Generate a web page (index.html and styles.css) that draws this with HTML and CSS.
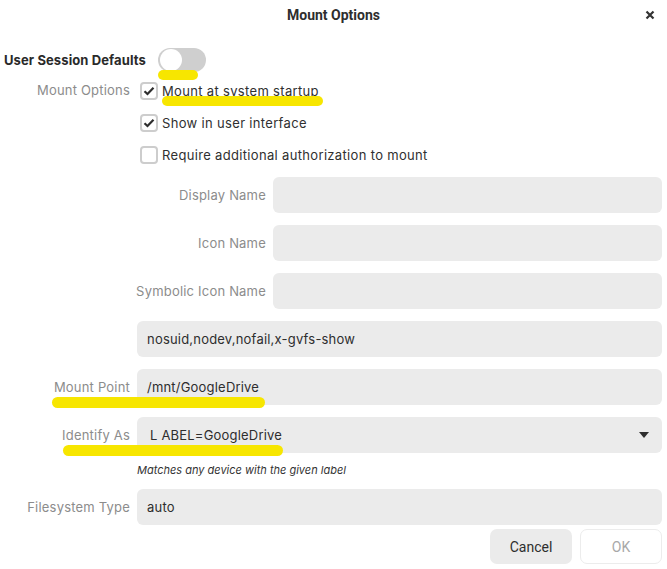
FILE: index.html
```html
<!DOCTYPE html>
<html>
<head>
<meta charset="utf-8">
<link rel="stylesheet" href="styles.css">
</head>
<body>
<div class="dialog">
  <header class="titlebar">
    <span class="title">Mount Options</span>
    <span class="close">
      <svg width="10" height="10" viewBox="0 0 10 10"><path d="M1.5 1.5 L8.5 8.5 M8.5 1.5 L1.5 8.5" stroke="#333" stroke-width="2.2" stroke-linecap="butt"/></svg>
    </span>
  </header>

  <div class="session-row">
    <span class="session-label">User Session Defaults</span>
    <span class="switch"><span class="knob"></span></span>
  </div>

  <div class="form">
    <div class="row row-checks">
      <span class="label label-top">Mount Options</span>
      <div class="checks">
        <label class="check"><span class="box on"><svg width="12" height="10" viewBox="0 0 12 10"><path d="M1.5 5.2 L4.5 8 L10.5 1.8" fill="none" stroke="#2e2e2e" stroke-width="2.2"/></svg></span><span>Mount at system startup</span></label>
        <label class="check"><span class="box on"><svg width="12" height="10" viewBox="0 0 12 10"><path d="M1.5 5.2 L4.5 8 L10.5 1.8" fill="none" stroke="#2e2e2e" stroke-width="2.2"/></svg></span><span>Show in user interface</span></label>
        <label class="check"><span class="box"></span><span>Require additional authorization to mount</span></label>
      </div>
    </div>

    <div class="row">
      <span></span>
      <div class="subform">
        <div class="subrow"><span class="label">Display Name</span><div class="entry"></div></div>
        <div class="subrow"><span class="label">Icon Name</span><div class="entry"></div></div>
        <div class="subrow"><span class="label">Symbolic Icon Name</span><div class="entry"></div></div>
        <div class="entry">nosuid,nodev,nofail,x-gvfs-show</div>
      </div>
    </div>

    <div class="row">
      <span class="label">Mount Point</span>
      <div class="entry">/mnt/GoogleDrive</div>
    </div>

    <div class="row row-identify">
      <span class="label">Identify As</span>
      <div class="combo-wrap">
        <div class="entry combo"><span>L ABEL=GoogleDrive</span><svg class="arrow" width="10" height="6" viewBox="0 0 10 6"><path d="M0 0 H10 L5 6 Z" fill="#2e2e2e"/></svg></div>
        <div class="hint">Matches any device with the given label</div>
      </div>
    </div>

    <div class="row">
      <span class="label">Filesystem Type</span>
      <div class="entry">auto</div>
    </div>
  </div>

  <div class="buttons">
    <button class="btn cancel">Cancel</button>
    <button class="btn ok">OK</button>
  </div>

  <span class="mark mark-switch"></span>
  <span class="mark mark-startup"></span>
  <span class="mark mark-point"></span>
  <span class="mark mark-identify"></span>
</div>
</body>
</html>
```

FILE: styles.css
```css
html, body {
  margin: 0;
  padding: 0;
  background: #ffffff;
}

.dialog {
  position: relative;
  width: 667px;
  height: 569px;
  font-family: Inter, "Noto Sans", sans-serif;
  font-size: 13px;
  letter-spacing: 0.2px;
  color: #303030;
  overflow: hidden;
}

.titlebar {
  height: 30px;
  display: flex;
  align-items: center;
  justify-content: center;
  position: relative;
}

.title {
  font-family: Roboto, "Liberation Sans", sans-serif;
  font-weight: 700;
  font-size: 14px;
  letter-spacing: 0;
  color: #2e2e2e;
}

.close {
  position: absolute;
  right: 12px;
  top: 10px;
  width: 10px;
  height: 10px;
  display: flex;
}

.session-row {
  display: flex;
  align-items: center;
  height: 24px;
  margin-top: 18px;
  padding-left: 4px;
  gap: 12px;
}

.session-label {
  font-weight: 700;
  font-size: 13px;
  letter-spacing: 0.1px;
  color: #2a2a2a;
}

.switch {
  width: 48px;
  height: 24px;
  border-radius: 12px;
  background: #cfcfcf;
  display: flex;
  align-items: center;
  padding-left: 2px;
  box-sizing: border-box;
}

.knob {
  width: 22px;
  height: 22px;
  border-radius: 50%;
  background: #ffffff;
}

.form {
  display: flex;
  flex-direction: column;
  gap: 12px;
  margin-top: 10px;
  padding-right: 5px;
}

.row {
  display: grid;
  grid-template-columns: 130px 1fr;
  column-gap: 7px;
  align-items: center;
}

.label {
  text-align: right;
  white-space: nowrap;
  color: #8c8c8c;
}

.label-top {
  align-self: start;
}

.row-checks {
  margin-bottom: 1px;
}

.checks {
  display: flex;
  flex-direction: column;
  gap: 14px;
  padding-left: 3px;
  letter-spacing: 0.33px;
}

.check {
  display: flex;
  align-items: center;
  gap: 4px;
  height: 18px;
}

.box {
  width: 18px;
  height: 18px;
  box-sizing: border-box;
  border: 2px solid #cdcdcd;
  border-radius: 4px;
  display: flex;
  align-items: center;
  justify-content: center;
  background: #fff;
}

.subform {
  display: flex;
  flex-direction: column;
  gap: 12px;
}

.subrow {
  display: grid;
  grid-template-columns: 129px 1fr;
  column-gap: 7px;
  align-items: center;
}

.subrow .label {
  justify-self: end;
}

.entry {
  height: 36px;
  border-radius: 6px;
  background: #ebebeb;
  display: flex;
  align-items: center;
  padding: 0 10px;
  box-sizing: border-box;
  color: #2e2e2e;
}

.combo {
  justify-content: space-between;
  padding-left: 13px;
  padding-right: 13px;
}

.combo-wrap {
  display: flex;
  flex-direction: column;
  gap: 10px;
}

.row-identify {
  align-items: start;
}

.row-identify .label {
  line-height: 36px;
}

.hint {
  font-size: 11px;
  font-style: italic;
  letter-spacing: 0;
  color: #333;
}

.buttons {
  display: flex;
  justify-content: flex-end;
  gap: 8px;
  padding-right: 5px;
  margin-top: 4px;
}

.btn {
  width: 82px;
  height: 35px;
  border-radius: 7px;
  font-family: Roboto, "Liberation Sans", sans-serif;
  font-size: 14px;
  box-sizing: border-box;
}

.cancel {
  background: #ebebeb;
  border: none;
  color: #2e2e2e;
}

.ok {
  background: #ffffff;
  border: 1px solid #ececec;
  color: #a8a8a8;
}

.mark {
  position: absolute;
  background: #f7e600;
  border-radius: 6px;
}

.mark-switch {
  left: 158px;
  top: 70px;
  width: 40px;
  height: 10px;
}

.mark-startup {
  left: 162px;
  top: 96px;
  width: 161px;
  height: 10px;
}

.mark-point {
  left: 52px;
  top: 397px;
  width: 213px;
  height: 11px;
}

.mark-identify {
  left: 63px;
  top: 445px;
  width: 220px;
  height: 11px;
}
```
